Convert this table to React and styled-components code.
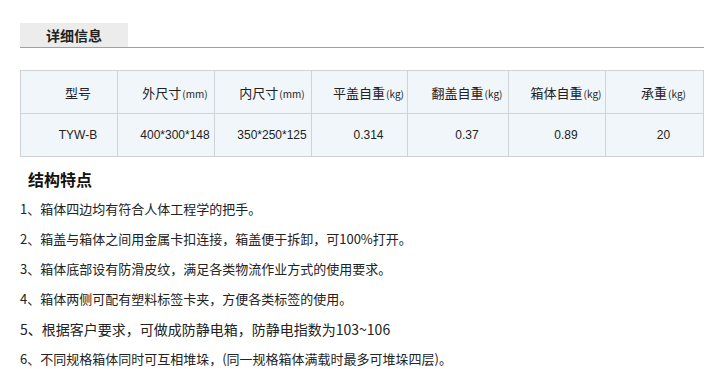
import React from 'react'
import styled, { createGlobalStyle } from 'styled-components'

const GlobalStyle = createGlobalStyle`
  body {
    margin: 0;
    background: #fff;
    font-family: "Noto Sans CJK SC", "Liberation Sans", sans-serif;
    color: #222;
  }
`

const Page = styled.div`
  padding: 23px 22px 0 20px;
`

const TabBar = styled.div`
  display: flex;
  border-bottom: 1px solid #a0a0a0;
`

const Tab = styled.div`
  width: 108px;
  height: 24px;
  background: #ececec;
  display: flex;
  align-items: center;
  justify-content: center;
  font-size: 14px;
  font-weight: bold;
  color: #222;
`

const Table = styled.table`
  margin-top: 22px;
  width: 684px;
  border-collapse: collapse;
  table-layout: fixed;
  background: #f1f6fb;
`

const Cell = styled.td`
  height: 42px;
  border: 1px solid #cfd3d8;
  padding: 0 0 0 18px;
  text-align: center;
  vertical-align: middle;
  font-size: ${p => (p.$head ? '13px' : '12px')};
  font-family: ${p => (p.$head ? '"Noto Sans CJK SC", sans-serif' : '"Liberation Sans", sans-serif')};
  color: #222;
`

const Unit = styled.span`
  font-size: 10px;
  margin-left: 1px;
`

const Heading = styled.h3`
  margin: 7px 0 0 8px;
  height: 30px;
  line-height: 30px;
  font-size: 16px;
  font-weight: bold;
  color: #111;
`

const List = styled.div`
  margin-top: 0;
`

const Item = styled.p`
  margin: 0;
  height: 30px;
  line-height: 30px;
  font-size: ${p => (p.$big ? '14px' : '13px')};
  color: #222;
  white-space: nowrap;
`

const columns = [
  { name: '型号', width: 97 },
  { name: '外尺寸', unit: '(mm)', width: 97 },
  { name: '内尺寸', unit: '(mm)', width: 97 },
  { name: '平盖自重', unit: '(kg)', width: 96 },
  { name: '翻盖自重', unit: '(kg)', width: 101 },
  { name: '箱体自重', unit: '(kg)', width: 97 },
  { name: '承重', unit: '(kg)', width: 98 },
]

const row = ['TYW-B', '400*300*148', '350*250*125', '0.314', '0.37', '0.89', '20']

const features = [
  '1、箱体四边均有符合人体工程学的把手。',
  '2、箱盖与箱体之间用金属卡扣连接，箱盖便于拆卸，可100%打开。',
  '3、箱体底部设有防滑皮纹，满足各类物流作业方式的使用要求。',
  '4、箱体两侧可配有塑料标签卡夹，方便各类标签的使用。',
  '5、根据客户要求，可做成防静电箱，防静电指数为103~106',
  '6、不同规格箱体同时可互相堆垛，(同一规格箱体满载时最多可堆垛四层)。',
]

export default function App() {
  return (
    <>
      <GlobalStyle />
      <Page>
        <TabBar>
          <Tab>详细信息</Tab>
        </TabBar>
        <Table>
          <colgroup>
            {columns.map(c => (
              <col key={c.name} style={{ width: c.width }} />
            ))}
          </colgroup>
          <tbody>
            <tr>
              {columns.map(c => (
                <Cell key={c.name} $head>
                  {c.name}
                  {c.unit && <Unit>{c.unit}</Unit>}
                </Cell>
              ))}
            </tr>
            <tr>
              {row.map((v, i) => (
                <Cell key={i}>{v}</Cell>
              ))}
            </tr>
          </tbody>
        </Table>
        <Heading>结构特点</Heading>
        <List>
          {features.map((f, i) => (
            <Item key={i} $big={i === 4}>{f}</Item>
          ))}
        </List>
      </Page>
    </>
  )
}
